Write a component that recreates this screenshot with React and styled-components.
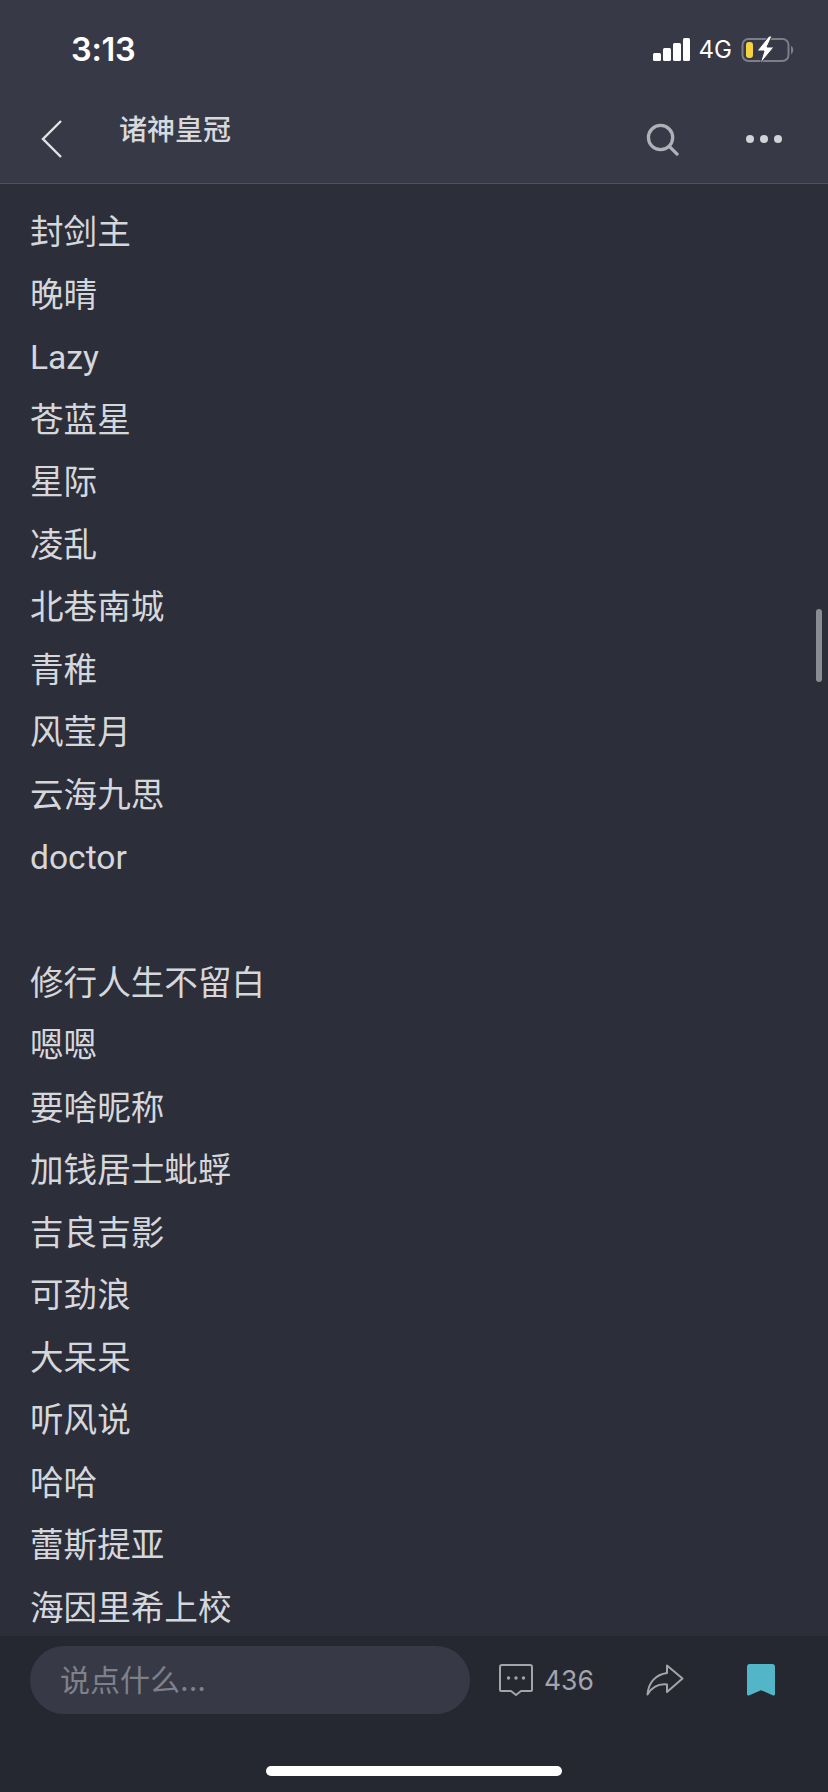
import React from "react";
import styled, { createGlobalStyle } from "styled-components";

const FONT_STACK = `Inter, "Noto Sans CJK SC", "Noto Sans", sans-serif`;
const ROW_FONT_STACK = `Roboto, "Noto Sans CJK SC", "Noto Sans", sans-serif`;

const GlobalStyle = createGlobalStyle`
  html, body {
    margin: 0;
    padding: 0;
    background: #2c2e3a;
  }
`;

const names = [
  "封剑主", "晚晴", "Lazy", "苍蓝星", "星际", "凌乱", "北巷南城", "青稚", "风莹月", "云海九思", "doctor", "",
  "修行人生不留白", "嗯嗯", "要啥昵称", "加钱居士蚍蜉", "吉良吉影", "可劲浪", "大呆呆", "听风说", "哈哈", "蕾斯提亚", "海因里希上校",
];

const Page = styled.div`
  width: 828px;
  height: 1792px;
  display: flex;
  flex-direction: column;
  position: relative;
  overflow: hidden;
  background: #2c2e3a;
  font-family: ${FONT_STACK};
`;

const Header = styled.header`
  height: 183px;
  flex: none;
  background: #373a46;
  border-bottom: 1px solid #50525d;
  display: flex;
  flex-direction: column;
`;

const StatusBar = styled.div`
  height: 98px;
  display: flex;
  align-items: center;
  justify-content: space-between;
  padding: 1px 33px 0 71px;
  box-sizing: border-box;
`;

const Time = styled.span`
  color: #fff;
  font-size: 32.5px;
  font-weight: 600;
  letter-spacing: -0.3px;
`;

const StatusIcons = styled.div`
  display: flex;
  align-items: center;
  gap: 9px;
`;

const Network = styled.span`
  color: #fff;
  font-size: 24px;
`;

const NavBar = styled.div`
  flex: 1;
  display: flex;
  align-items: flex-start;
  position: relative;
`;

const BackButton = styled.div`
  width: 119px;
  padding: 22px 0 0 41px;
  box-sizing: border-box;
  flex: none;
`;

const Title = styled.div`
  flex: 1;
  color: #d8d9dd;
  font-size: 28px;
  line-height: 36px;
  font-weight: 500;
  padding-top: 14px;
`;

const NavActions = styled.div`
  display: flex;
  align-items: center;
  gap: 67px;
  padding: 25px 46px 0 0;
`;

const MoreIcon = styled.svg`
  margin-top: -2px;
`;

const List = styled.main`
  flex: 1;
  padding: 18px 0 0 30px;
  min-height: 0;
  overflow: hidden;
`;

const Row = styled.div`
  height: 62.55px;
  line-height: 62.55px;
  font-family: ${ROW_FONT_STACK};
  font-size: 33.6px;
  color: #d6d7db;
  white-space: nowrap;
`;

const ScrollThumb = styled.div`
  position: absolute;
  right: 6px;
  top: 609px;
  width: 6px;
  height: 73px;
  border-radius: 3px;
  background: #8a8b93;
`;

const BottomBar = styled.footer`
  height: 156px;
  flex: none;
  background: #252731;
  display: flex;
  flex-direction: column;
`;

const ActionRow = styled.div`
  display: flex;
  align-items: center;
  padding: 10px 0 0 30px;
`;

const InputPill = styled.div`
  width: 440px;
  height: 68px;
  border-radius: 34px;
  background: #373a46;
  color: #7f818a;
  font-size: 30px;
  line-height: 68px;
  padding-left: 30px;
  box-sizing: border-box;
  flex: none;
`;

const CommentGroup = styled.div`
  display: flex;
  align-items: center;
  gap: 11px;
  margin-left: 29px;
  color: #a4a5ab;
  font-size: 26.5px;
`;

const ShareIcon = styled.svg`
  margin-left: 52px;
`;

const BookmarkIcon = styled.svg`
  margin-left: 63px;
`;

const HomeIndicator = styled.div`
  width: 296px;
  height: 10px;
  border-radius: 5px;
  background: #fff;
  margin: 52px auto 0;
`;

const App = () => (
  <Page>
    <GlobalStyle />
    <Header>
      <StatusBar>
        <Time>3:13</Time>
        <StatusIcons>
          <svg width="37" height="24" viewBox="0 0 37 24">
            <rect x="0" y="15" width="8" height="8" rx="1.5" fill="#fff" />
            <rect x="10" y="10" width="8" height="13" rx="1.5" fill="#fff" />
            <rect x="20" y="5" width="8" height="18" rx="1.5" fill="#fff" />
            <rect x="30" y="0" width="7" height="23" rx="1.5" fill="#fff" />
          </svg>
          <Network>4G</Network>
          <svg width="54" height="28" viewBox="0 0 54 28">
            <rect x="1.5" y="3" width="46" height="22" rx="6" fill="none" stroke="#7c7e88" strokeWidth="2" />
            <rect x="5" y="6" width="7" height="16" rx="3" fill="#f6d23f" />
            <path d="M50 10 C53 11 53 17 50 18 Z" fill="#7c7e88" />
            <path d="M28 0 L16 15 H23 L19 28 L33 11 H26 L31 0 Z" fill="#fff" stroke="#373a46" strokeWidth="1" />
          </svg>
        </StatusIcons>
      </StatusBar>
      <NavBar>
        <BackButton>
          <svg width="22" height="38" viewBox="0 0 22 38">
            <path d="M20 1 L2 19 L20 37" fill="none" stroke="#e2e3e6" strokeWidth="2.4" />
          </svg>
        </BackButton>
        <Title>诸神皇冠</Title>
        <NavActions>
          <svg width="33" height="33" viewBox="0 0 34 34">
            <circle cx="15" cy="15" r="12.5" fill="none" stroke="#b0b1b8" strokeWidth="3.4" />
            <path d="M24 24 L32 32" stroke="#b0b1b8" strokeWidth="3.4" strokeLinecap="round" />
          </svg>
          <MoreIcon width="36" height="10" viewBox="0 0 36 10">
            <circle cx="4" cy="5" r="4" fill="#d2d3d7" />
            <circle cx="18" cy="5" r="4" fill="#d2d3d7" />
            <circle cx="32" cy="5" r="4" fill="#d2d3d7" />
          </MoreIcon>
        </NavActions>
      </NavBar>
    </Header>
    <List>
      {names.map((name, i) => (
        <Row key={i}>{name}</Row>
      ))}
    </List>
    <ScrollThumb />
    <BottomBar>
      <ActionRow>
        <InputPill>说点什么...</InputPill>
        <CommentGroup>
          <svg width="34" height="32" viewBox="0 0 34 32">
            <path
              d="M3 1 H31 A2 2 0 0 1 33 3 V26 A1 1 0 0 1 32 27 H22 L17 31 L12 27 H2 A1 1 0 0 1 1 26 V3 A2 2 0 0 1 3 1 Z"
              fill="none"
              stroke="#a4a5ab"
              strokeWidth="2"
              strokeLinejoin="round"
            />
            <circle cx="9.5" cy="14" r="1.7" fill="#a4a5ab" />
            <circle cx="17" cy="14" r="1.7" fill="#a4a5ab" />
            <circle cx="24.5" cy="14" r="1.7" fill="#a4a5ab" />
          </svg>
          <span>436</span>
        </CommentGroup>
        <ShareIcon width="38" height="32" viewBox="0 0 38 32">
          <path
            d="M21 1.5 L36.5 14.5 L21 28 V20.5 C12 19.5 6 23 1.5 30.5 C2.5 18 10 10.5 21 9 Z"
            fill="none"
            stroke="#a4a5ab"
            strokeWidth="2"
            strokeLinejoin="round"
          />
        </ShareIcon>
        <BookmarkIcon width="28" height="32" viewBox="0 0 30 33" preserveAspectRatio="none">
          <path
            d="M3 0 H27 A3 3 0 0 1 30 3 V31 A1.5 1.5 0 0 1 28 32.5 L15 27 L2 32.5 A1.5 1.5 0 0 1 0 31 V3 A3 3 0 0 1 3 0 Z"
            fill="#52b6c8"
          />
        </BookmarkIcon>
      </ActionRow>
      <HomeIndicator />
    </BottomBar>
  </Page>
);

export default App;
